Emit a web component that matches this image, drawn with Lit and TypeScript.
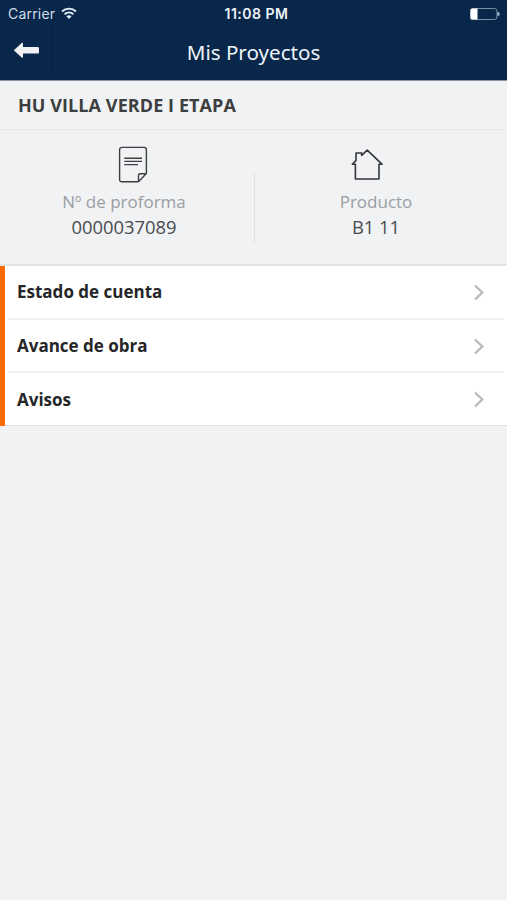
import { LitElement, html, css } from "lit";
import { customElement, state } from "lit/decorators.js";

@customElement("app-root")
class AppRoot extends LitElement {
  @state() private items = ["Estado de cuenta", "Avance de obra", "Avisos"];

  static styles = css`
    :host {
      display: flex;
      flex-direction: column;
      height: 900px;
      background: #f0f2f4;
      font-family: "Open Sans", "Noto Sans", sans-serif;
      overflow: hidden;
    }
    * { box-sizing: border-box; }
    svg { display: block; flex: none; }
    .top {
      height: 80px;
      flex: none;
      background: #08274a;
      color: #eef3f8;
    }
    .status {
      height: 27px;
      display: grid;
      grid-template-columns: 1fr auto 1fr;
      align-items: center;
      padding: 0 7px 0 8px;
      font-family: Inter, "Liberation Sans", sans-serif;
      font-size: 14px;
      line-height: 27px;
    }
    .carrier { display: flex; align-items: center; gap: 6px; color: #d3deea; letter-spacing: 0.2px; }
    .time { font-weight: 600; font-size: 14px; letter-spacing: 0.5px; padding-left: 5px; }
    .battery { justify-self: end; }
    .nav {
      height: 53px;
      display: grid;
      grid-template-columns: 53px 1fr 53px;
    }
    .back { padding: 15px 0 0 13px; height: 49px; border-right: 1px solid #051f42; }
    .title { margin: 0; font-weight: 400; font-size: 20.6px; line-height: 51px; text-align: center; font-family: "Noto Sans", sans-serif; }
    .project {
      margin: 0;
      height: 50px;
      flex: none;
      padding-left: 18px;
      border-top: 1px solid #8b95a5;
      border-bottom: 1px solid #e4e6e8;
      font-size: 18px;
      line-height: 48px;
      letter-spacing: 0.08px;
      font-weight: 700;
      color: #3c3e40;
    }
    .info {
      height: 136px;
      flex: none;
      display: grid;
      grid-template-columns: 254px 1fr;
      border-bottom: 2px solid #e2e4e6;
      position: relative;
    }
    .cell { display: flex; flex-direction: column; align-items: center; padding-top: 15px; }
    .proforma { padding-right: 6px; }
    .product { padding-right: 9px; }
    .house { margin-right: 19px; }
    .doc { margin-left: 18px; }
    .label { margin-top: 6px; font-size: 17px; line-height: 25px; color: #9b9ea1; }
    .value { font-size: 18.4px; line-height: 26px; color: #4a4c4e; }
    .rule { position: absolute; left: 254px; top: 43px; width: 1px; height: 70px; background: #dedfe1; }
    .list {
      flex: none;
      height: 160px;
      background: #fff;
      border-left: 5px solid #ff6a00;
      display: flex;
      flex-direction: column;
    }
    .row {
      flex: 1;
      display: flex;
      align-items: center;
      justify-content: space-between;
      margin: 0 3px;
      padding: 0 19px 0 9px;
      border-bottom: 2px solid #eff0f1;
      font-size: 17px;
      font-weight: 700;
      color: #252628;
    }
    .row:last-child { margin: 0; padding: 0 22px 0 12px; border-bottom: 1px solid #dfe1e3; }
  `;

  render() {
    return html`
      <header class="top">
        <div class="status">
          <div class="carrier"><span>Carrier</span>
            <svg width="16" height="13" viewBox="0 0 16 13" fill="none" stroke="#e4edf6" stroke-width="1.9">
              <path d="M1 4.5C5 .7 11 .7 15 4.5M3.6 7.3C6.2 4.9 9.8 4.9 12.4 7.3"/>
              <path d="M5.4 9.2C6.8 7.9 9.2 7.9 10.6 9.2L8 11.9Z" fill="#e4edf6" stroke="none"/>
            </svg>
          </div>
          <div class="time">11:08 PM</div>
          <svg class="battery" width="31" height="14" viewBox="0 0 31 14">
            <rect x="1.5" y="1.5" width="26.5" height="11" rx="2.5" fill="none" stroke="#7890a5"/>
            <path d="M3 1.5H8.5V12.5H3Q1.5 12.5 1.5 11V3Q1.5 1.5 3 1.5Z" fill="#fff"/>
            <path d="M28.5 4.7Q30.8 5.5 30.8 7T28.5 9.3Z" fill="#a9c9e2"/>
          </svg>
        </div>
        <div class="nav">
          <div class="back">
            <svg width="27" height="17" viewBox="0 0 27 17"><path d="M.8 8.3 9 .8Q10 .4 10 1.5V5H24.5Q26 5 26 6.2V10.4Q26 11.6 24.5 11.6H10V15Q10 16 9 15.7Z" fill="#f1f1f3"/></svg>
          </div>
          <h1 class="title">Mis Proyectos</h1>
        </div>
      </header>
      <h2 class="project">HU VILLA VERDE I ETAPA</h2>
      <section class="info">
        <div class="cell proforma">
          <svg class="doc" width="30" height="38" viewBox="0 0 30 38" fill="none" stroke="#3d3f41" stroke-width="1.4">
            <path d="M19.5 36.8H4Q1.6 36.8 1.6 34.4V4.8Q1.6 2.4 4 2.4H26Q28.4 2.4 28.4 4.8V28.5L21 36.2Q20.4 36.8 19.5 36.8ZM20.5 36.5V30.5Q20.5 28.8 22.3 28.8H28"/>
            <path d="M6.3 13.2H24M6.3 16.4H24M6.3 19.6H20"/>
          </svg>
          <div class="label">Nº de proforma</div>
          <div class="value">0000037089</div>
        </div>
        <div class="cell product">
          <svg class="house" width="32" height="38" viewBox="0 0 32 38" fill="none" stroke="#35373a" stroke-width="1.6" stroke-linejoin="round">
            <path d="M4.4 34H28V19.2H31L16.2 5.2L10.6 10.3V8H5V15.6L1.3 19.2H4.4Z"/>
          </svg>
          <div class="label">Producto</div>
          <div class="value">B1 11</div>
        </div>
        <div class="rule"></div>
      </section>
      <nav class="list">
        ${this.items.map((t) => html`<div class="row"><span>${t}</span>
          <svg width="12" height="18" viewBox="0 0 12 18" fill="none" stroke="#b9bbbd" stroke-width="2.4"><path d="M2 2.5 9.3 9.5 2 16.5"/></svg></div>`)}
      </nav>
    `;
  }
}
